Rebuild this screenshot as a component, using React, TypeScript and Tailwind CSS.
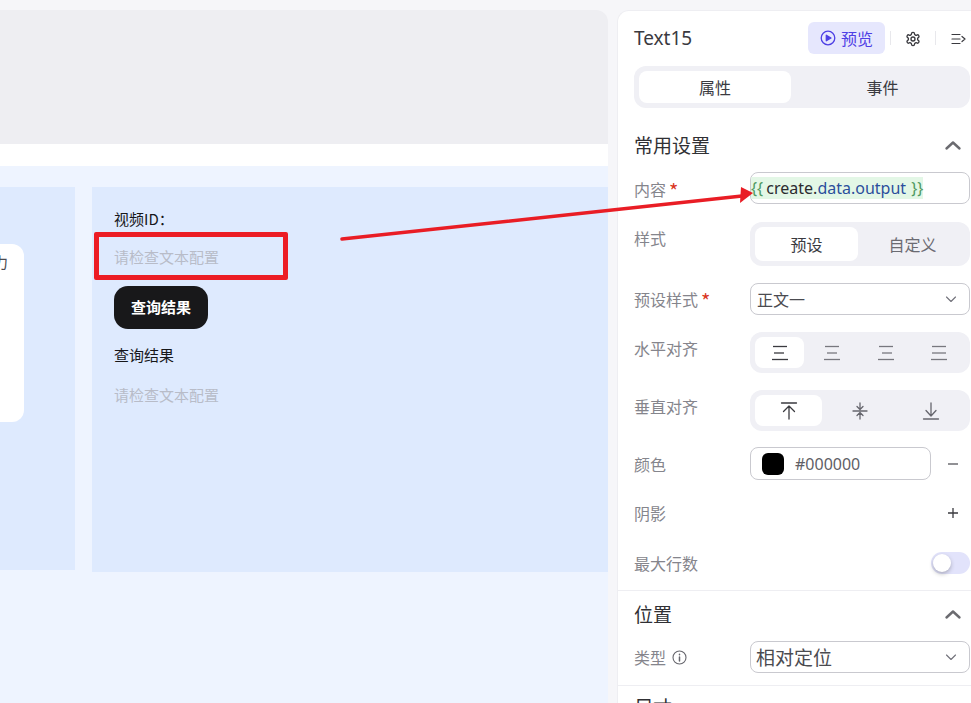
import React from "react";

const font = { fontFamily: '"Noto Sans CJK SC", "Noto Sans", sans-serif' };

function Chevron() {
  return (
    <svg width="12" height="12" viewBox="0 0 12 12" fill="none" stroke="#71717a" strokeWidth="1.1" strokeLinecap="round" strokeLinejoin="round">
      <path d="M1.500 4l4.500 4.500L10.500 4" />
    </svg>
  );
}

function Caret() {
  return (
    <svg width="18" height="12" viewBox="0 0 18 12" fill="none" stroke="#6b6b70" strokeWidth="2.4" strokeLinecap="round" strokeLinejoin="round">
      <path d="M2.500 9.500L9 3.500l6.500 6" />
    </svg>
  );
}

function Label({ children, req, top }: { children: React.ReactNode; req?: boolean; top?: boolean }) {
  return (
    <div className={`w-[116px] shrink-0 text-[16px] leading-[24px] text-[#85858c] flex items-center ${top ? "mt-[4px]" : ""}`}>
      <span>{children}</span>
      {req && <span className="ml-[3px] mt-[4px] text-[#d9361e] text-[20px] leading-[20px]">*</span>}
    </div>
  );
}

function Align({ kind, color }: { kind: "l" | "c" | "r" | "j"; color: string }) {
  const mid: Record<string, string> = { l: "M4 9h10", c: "M5 9h10", r: "M6 9h10", j: "M3 9h14" };
  return (
    <svg width="20" height="18" viewBox="0 0 20 18" fill="none" stroke={color} strokeWidth="1.3">
      <path d="M3 2.500h14" />
      <path d={mid[kind]} />
      <path d="M2 15.500h16" />
    </svg>
  );
}

function VIcon({ kind, color }: { kind: "t" | "m" | "b"; color: string }) {
  return (
    <svg width="18" height="20" viewBox="0 0 18 20" fill="none" stroke={color} strokeWidth="1.3" strokeLinecap="round" strokeLinejoin="round">
      {kind === "t" && <path d="M1.500 2h15M9 18V5M3.500 10.500L9 5l5.500 5.500" />}
      {kind === "m" && <path d="M2 10h14M9 2v6M6 5.500L9 8.500l3-3M9 18v-6M6 14.500l3-3 3 3" />}
      {kind === "b" && <path d="M1.500 18h15M9 2v13M4 9.500L9 15l5-5.500" />}
    </svg>
  );
}

export default function App() {
  return (
    <div className="relative w-[971px] h-[703px] overflow-hidden bg-[#f6f6f9] flex" style={font}>
      {/* canvas */}
      <div className="w-[608px] shrink-0 pt-[10px] flex flex-col">
        <div className="h-[134px] bg-[#eeeef2] rounded-tr-[12px]" />
        <div className="h-[22px] bg-white" />
        <div className="flex-1 bg-[#eef4ff] pt-[21px] flex items-start">
          <div className="w-[75px] h-[383px] bg-[#deeafe] pt-[57px]">
            <div className="w-[24px] h-[178px] bg-white rounded-r-[12px] overflow-hidden pt-[8px]">
              <div className="-ml-[7px] text-[15px] leading-[20px] text-[#4b4b50]">力</div>
            </div>
          </div>
          <div className="ml-[17px] flex-1 h-[385px] bg-[#deeafe] pl-[22px] pt-[22px]">
            <div className="text-[15px] leading-[20px] text-[#17171a]">视频ID：</div>
            <div className="mt-[18px] text-[15px] leading-[20px] text-[#b8bcc8]">请检查文本配置</div>
            <button className="mt-[19px] block w-[94px] h-[43px] rounded-[14px] bg-[#18181a] text-white text-[15px] font-bold">查询结果</button>
            <div className="mt-[16px] text-[15px] leading-[20px] text-[#17171a]">查询结果</div>
            <div className="mt-[20px] text-[15px] leading-[20px] text-[#b8bcc8]">请检查文本配置</div>
          </div>
        </div>
      </div>

      {/* side panel */}
      <div className="ml-[9px] mt-[10px] w-[354px] shrink-0 bg-white rounded-tl-[12px] border border-[#eeeef2] border-r-0 border-b-0 pl-[16px] overflow-hidden">
        <div className="mt-[11px] h-[32px] flex items-center">
          <div className="text-[19px] leading-[26px] text-[#3a3a3f] w-[174px]" style={{ fontFamily: '"Noto Sans", sans-serif' }}>Text15</div>
          <div className="w-[77px] h-[32px] rounded-[6px] bg-[#e6e7fd] flex items-center justify-center gap-[5px] text-[#4e40e5] text-[16px]">
            <svg width="16" height="16" viewBox="0 0 16 16" fill="none" stroke="#4e40e5" strokeWidth="1.3" strokeLinejoin="round">
              <circle cx="8" cy="8" r="6.800" />
              <path d="M6.300 5.200v5.600L11 8z" fill="#4e40e5" />
            </svg>
            <span>预览</span>
          </div>
          <div className="ml-[5px] w-px h-[14px] bg-[#e8e8ec]" />
          <div className="ml-[14px] mt-[2px]">
            <svg width="16" height="16" viewBox="0 0 24 24" fill="none" stroke="#3a3a3f" strokeWidth="2" strokeLinecap="round" strokeLinejoin="round">
              <path d="M12.220 2h-.44a2 2 0 0 0-2 2v.18a2 2 0 0 1-1 1.730l-.43.250a2 2 0 0 1-2 0l-.150-.080a2 2 0 0 0-2.730.730l-.220.380a2 2 0 0 0 .730 2.730l.150.100a2 2 0 0 1 1 1.720v.510a2 2 0 0 1-1 1.740l-.150.090a2 2 0 0 0-.730 2.730l.220.380a2 2 0 0 0 2.730.730l.150-.080a2 2 0 0 1 2 0l.430.250a2 2 0 0 1 1 1.730V20a2 2 0 0 0 2 2h.440a2 2 0 0 0 2-2v-.180a2 2 0 0 1 1-1.730l.430-.250a2 2 0 0 1 2 0l.150.080a2 2 0 0 0 2.730-.730l.220-.390a2 2 0 0 0-.730-2.730l-.150-.080a2 2 0 0 1-1-1.740v-.500a2 2 0 0 1 1-1.740l.150-.090a2 2 0 0 0 .730-2.730l-.220-.380a2 2 0 0 0-2.730-.730l-.150.080a2 2 0 0 1-2 0l-.430-.250a2 2 0 0 1-1-1.730V4a2 2 0 0 0-2-2z" />
              <circle cx="12" cy="12" r="3" />
            </svg>
          </div>
          <div className="ml-[14px] w-px h-[14px] bg-[#e8e8ec]" />
          <div className="ml-[15px] mt-[2px]">
            <svg width="15" height="12" viewBox="0 0 15 12" fill="none" stroke="#3a3a3f" strokeWidth="1.200" strokeLinecap="round" strokeLinejoin="round">
              <path d="M1 1.500h8M1 6h8M1 10.500h8M11 3.500L14 6l-3 2.500" />
            </svg>
          </div>
        </div>

        <div className="mt-[12px] w-[336px] h-[42px] rounded-[12px] bg-[#f0f0f5] pl-[5px] py-[5px] flex text-[16px] text-[#3a3a3f]">
          <div className="w-[152px] rounded-[8px] bg-white flex items-center justify-center">属性</div>
          <div className="flex-1 pl-[4px] flex items-center justify-center">事件</div>
        </div>

        <div className="mt-[24px] w-[336px] h-[26px] pr-[8px] flex items-center justify-between">
          <span className="text-[19px] leading-[26px] text-[#303034]">常用设置</span>
          <Caret />
        </div>

        <div className="mt-[14px] w-[336px] flex items-center h-[32px]">
          <div className="mt-[2px]"><Label req>内容</Label></div>
          <div className="w-[220px] h-[32px] rounded-[8px] border border-[#c9c9cf] flex items-center overflow-hidden text-[16px]" style={{ fontFamily: '"Noto Sans", sans-serif' }}>
            <span className="h-[22px] leading-[22px] bg-[#e3f7e6] whitespace-nowrap">
              <span className="text-[#4f9a62]">{"{{"}</span>
              <span className="text-[#2b2b2f] -ml-[1px]"> create.</span>
              <span className="text-[#2b4f9c]">data.output</span>
              <span className="text-[#4f9a62] ml-[1px]"> {"}}"}</span>
            </span>
          </div>
        </div>

        <div className="mt-[18px] w-[336px] flex items-start">
          <Label top>样式</Label>
          <div className="w-[220px] h-[44px] rounded-[12px] bg-[#f0f0f5] pl-[5px] pr-[3px] py-[5px] flex text-[16px]">
            <div className="w-[103px] rounded-[8px] bg-white flex items-center justify-center text-[#3a3a3f]">预设</div>
            <div className="flex-1 flex items-center justify-center text-[#6b6b72]">自定义</div>
          </div>
        </div>

        <div className="mt-[17px] w-[336px] flex items-center h-[32px]">
          <Label req>预设样式</Label>
          <div className="w-[220px] h-[32px] rounded-[8px] border border-[#c9c9cf] pl-[6px] pr-[12px] flex items-center justify-between text-[16px] text-[#4b4b50]">
            <span>正文一</span>
            <Chevron />
          </div>
        </div>

        <div className="mt-[17px] w-[336px] flex items-start">
          <Label top>水平对齐</Label>
          <div className="w-[220px] h-[41px] rounded-[12px] bg-[#f0f0f5] p-[5px] flex">
            <div className="w-[49px] rounded-[8px] bg-white flex items-center justify-center"><Align kind="l" color="#3a3a3f" /></div>
            <div className="w-[56px] flex items-center justify-center"><Align kind="c" color="#77777e" /></div>
            <div className="w-[52px] flex items-center justify-center"><Align kind="r" color="#77777e" /></div>
            <div className="flex-1 flex items-center justify-center"><Align kind="j" color="#77777e" /></div>
          </div>
        </div>

        <div className="mt-[17px] w-[336px] flex items-start">
          <Label top>垂直对齐</Label>
          <div className="w-[220px] h-[41px] rounded-[12px] bg-[#f0f0f5] p-[5px] flex">
            <div className="w-[67px] rounded-[8px] bg-white flex items-center justify-center"><VIcon kind="t" color="#3a3a3f" /></div>
            <div className="w-[75px] flex items-center justify-center"><VIcon kind="m" color="#66666d" /></div>
            <div className="flex-1 flex items-center justify-center"><VIcon kind="b" color="#66666d" /></div>
          </div>
        </div>

        <div className="mt-[16px] w-[336px] flex items-center h-[33px]">
          <Label>颜色</Label>
          <div className="w-[181px] h-[33px] rounded-[8px] border border-[#c9c9cf] pl-[11px] flex items-center gap-[11px] text-[16px] text-[#5f5f66]" style={{ fontFamily: '"Noto Sans", sans-serif' }}>
            <span className="w-[22px] h-[22px] rounded-[6px] bg-black" />
            <span>#000000</span>
          </div>
          <svg className="ml-[16px]" width="12" height="12" viewBox="0 0 12 12" stroke="#55555c" strokeWidth="1.300"><path d="M1 6h10" /></svg>
        </div>

        <div className="mt-[17px] w-[336px] flex items-center justify-between h-[32px] pr-[11px]">
          <Label>阴影</Label>
          <svg width="12" height="12" viewBox="0 0 12 12" stroke="#3a3a3f" strokeWidth="1.300"><path d="M1 6h10M6 1v10" /></svg>
        </div>

        <div className="mt-[18px] w-[336px] flex items-center justify-between h-[32px]">
          <Label>最大行数</Label>
          <div className="w-[39px] h-[22px] rounded-full bg-[#e2e3fb] pl-[2px] flex items-center">
            <span className="w-[18px] h-[18px] rounded-full bg-white shadow-[0_2px_4px_rgba(0,0,0,0.25)]" />
          </div>
        </div>

        <div className="mt-[11px] -ml-[16px] h-px bg-[#eeeef2]" />

        <div className="mt-[10px] w-[336px] h-[26px] pr-[8px] flex items-center justify-between">
          <span className="text-[19px] leading-[26px] text-[#303034]">位置</span>
          <Caret />
        </div>

        <div className="mt-[14px] w-[336px] flex items-center h-[32px]">
          <div className="w-[116px] shrink-0 flex items-center gap-[6px] text-[16px] text-[#85858c]">
            <span>类型</span>
            <svg width="15" height="15" viewBox="0 0 15 15" fill="none" stroke="#66666d" strokeWidth="1.100" strokeLinecap="round">
              <circle cx="7.500" cy="7.500" r="6.500" />
              <path d="M7.500 7v4M7.500 4.200v.6" strokeWidth="1.500" />
            </svg>
          </div>
          <div className="w-[220px] h-[32px] rounded-[8px] border border-[#c9c9cf] pl-[5px] pr-[12px] flex items-center justify-between text-[19px] text-[#4b4b50]">
            <span>相对定位</span>
            <Chevron />
          </div>
        </div>

        <div className="mt-[12px] -ml-[16px] h-px bg-[#eeeef2]" />

        <div className="mt-[8px] text-[19px] leading-[26px] text-[#303034]">尺寸</div>
      </div>

      {/* annotations */}
      <div className="absolute left-[94px] top-[232px] w-[194px] h-[48px] border-[5px] border-[#ec1c24] rounded-[2px]" />
      <svg className="absolute left-0 top-0 pointer-events-none" width="971" height="703" fill="none">
        <path d="M342 239L742 196" stroke="#e91d25" strokeWidth="3.500" strokeLinecap="round" />
        <path d="M753 193L741 187L740 203z" fill="#e91d25" />
      </svg>
    </div>
  );
}
